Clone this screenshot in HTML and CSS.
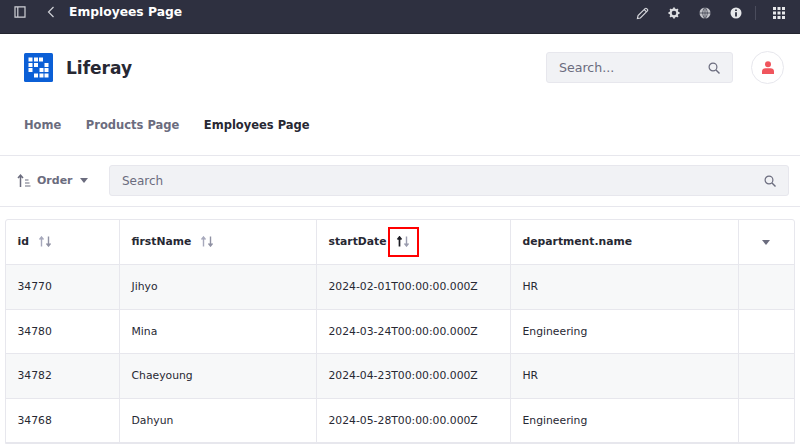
FILE: index.html
```html
<!DOCTYPE html>
<html>
<head>
    <title>Employees Page</title>
    <link rel="stylesheet" href="styles.css">
</head>
<body>
    <div class="control-bar">
        <div class="bar-left">
            <svg class="bar-icon" width="12" height="12" viewBox="0 0 12 12"><path d="M1 .8h10v10.400H1zM3.800 .8v10.400" fill="none" stroke="#cfd0d6" stroke-width="1.200"/></svg>
            <svg class="back-icon" width="8" height="12" viewBox="0 0 8 12"><path d="M6.500 1 1.500 6l5 5" fill="none" stroke="#cfd0d6" stroke-width="1.200"/></svg>
            <span class="bar-title">Employees Page</span>
        </div>
        <div class="bar-right">
            <svg width="13" height="13" viewBox="0 0 14 14"><path d="M1.500 12.500 2.200 9.300 9.800 1.700a1.200 1.200 0 0 1 1.700 0l.8.8a1.200 1.200 0 0 1 0 1.700L4.700 11.800zM8.800 2.700l2.500 2.500" fill="none" stroke="#d8d9de" stroke-width="1.200"/></svg>
            <svg width="12" height="12" viewBox="0 0 12 12"><circle cx="6" cy="6" r="3.400" fill="none" stroke="#dcdde1" stroke-width="2.200"/><path d="M6 .5v2M6 9.500v2M.5 6h2M9.500 6h2M2.100 2.100l1.400 1.400M8.500 8.500l1.400 1.400M9.900 2.100 8.500 3.500M3.500 8.500 2.100 9.900" stroke="#dcdde1" stroke-width="1.800"/></svg>
            <svg width="12" height="12" viewBox="0 0 12 12"><circle cx="6" cy="6" r="5.500" fill="#c4c5cb"/><path d="M6 0v12M0 6h12M6 .5C3 3 3 9 6 11.500M6 .5c3 2.500 3 8.500 0 11" fill="none" stroke="#2e3040" stroke-width=".7"/></svg>
            <svg width="12" height="12" viewBox="0 0 12 12"><circle cx="6" cy="6" r="5.500" fill="#e6e7ea"/><path d="M6 2.500v1.400M6 5.200v4.300" stroke="#2e3040" stroke-width="1.800"/></svg>
            <span class="bar-divider"></span>
            <svg width="12" height="12" viewBox="0 0 12 12" fill="#e6e7ea"><path d="M0 0h3v3H0zM4.500 0h3v3h-3zM9 0h3v3H9zM0 4.500h3v3H0zM4.500 4.500h3v3h-3zM9 4.500h3v3H9zM0 9h3v3H0zM4.500 9h3v3h-3zM9 9h3v3H9z"/></svg>
        </div>
    </div>

    <header class="site-header">
        <div class="brand">
            <svg width="29" height="29" viewBox="0 0 29 29"><rect width="29" height="29" rx="1.500" fill="#0b5fd6"/><path d="M4.500 4.500h4v4h-4zM10 4.500h4v4h-4zM15 4.500h4v4h-4zM4.500 10h4v4h-4zM10 10h4v4h-4zM20.500 10h4v4h-4zM4.500 15h4v4h-4zM15.500 15h4v4h-4zM20.500 15h4v4h-4zM10 20.500h4v4h-4zM15.500 20.500h4v4h-4zM20.500 20.500h4v4h-4z" fill="#fff"/></svg>
            <span class="brand-name">Liferay</span>
        </div>
        <div class="header-tools">
            <div class="header-search">
                <span>Search...</span>
                <svg width="12" height="12" viewBox="0 0 12 12"><circle cx="5" cy="5" r="3.900" fill="none" stroke="#6b6c7e" stroke-width="1.200"/><path d="M8 8l3.500 3.500" stroke="#6b6c7e" stroke-width="1.400"/></svg>
            </div>
            <div class="avatar">
                <svg width="12" height="13" viewBox="0 0 12 13" fill="#f0555d"><circle cx="6" cy="3.200" r="3"/><path d="M0 13v-2.500C0 8.500 1.500 7.300 3.500 7.300h5c2 0 3.500 1.200 3.500 3.200V13z"/></svg>
            </div>
        </div>
    </header>

    <nav class="site-nav">
        <a>Home</a>
        <a>Products Page</a>
        <a class="active">Employees Page</a>
    </nav>

    <div class="toolbar">
        <div class="order">
            <svg width="14" height="14" viewBox="0 0 14 14"><path d="M3.500 13V1.500M1 4l2.500-2.800L6 4" fill="none" stroke="#6b6c7e" stroke-width="1.500"/><path d="M8 6h3.500M8 9h4.500M8 12h5.500" stroke="#6b6c7e" stroke-width="1.200"/></svg>
            <span>Order</span>
            <i class="caret"></i>
        </div>
        <div class="toolbar-search">
            <span>Search</span>
            <svg width="12" height="12" viewBox="0 0 12 12"><circle cx="5" cy="5" r="3.900" fill="none" stroke="#6b6c7e" stroke-width="1.200"/><path d="M8 8l3.500 3.500" stroke="#6b6c7e" stroke-width="1.400"/></svg>
        </div>
    </div>

    <div class="table-wrap">
        <table>
            <thead>
                <tr>
                    <th class="col-id"><div class="th-in">id
                        <svg class="sort" width="14" height="11" viewBox="0 0 14 11"><path d="M3.500 10.500V1M1.500 3.500 3.500 1l2 2.500" fill="none" stroke="#a7a9bc" stroke-width="1.400"/><path d="M10.500 .5V10M8.500 7.500l2 2.500 2-2.500" fill="none" stroke="#8f91a3" stroke-width="1.400"/></svg>
                    </div></th>
                    <th class="col-name"><div class="th-in">firstName
                        <svg class="sort" width="14" height="11" viewBox="0 0 14 11"><path d="M3.500 10.500V1M1.500 3.500 3.500 1l2 2.500" fill="none" stroke="#a7a9bc" stroke-width="1.400"/><path d="M10.500 .5V10M8.500 7.500l2 2.500 2-2.500" fill="none" stroke="#8f91a3" stroke-width="1.400"/></svg>
                    </div></th>
                    <th class="col-date"><div class="th-in">startDate
                        <span class="highlight">
                            <svg width="14" height="11" viewBox="0 0 14 11"><path d="M3.500 10.500V1M1.500 3.500 3.500 1l2 2.500" fill="none" stroke="#1c1c24" stroke-width="1.700"/><path d="M10.500 .5V10M8.500 7.500l2 2.500 2-2.500" fill="none" stroke="#9a9cae" stroke-width="1.400"/></svg>
                        </span>
                    </div></th>
                    <th class="col-dept">department.name</th>
                    <th class="col-actions"><i class="caret"></i></th>
                </tr>
            </thead>
            <tbody>
                <tr class="odd"><td>34770</td><td>Jihyo</td><td>2024-02-01T00:00:00.000Z</td><td>HR</td><td></td></tr>
                <tr><td>34780</td><td>Mina</td><td>2024-03-24T00:00:00.000Z</td><td>Engineering</td><td></td></tr>
                <tr class="odd"><td>34782</td><td>Chaeyoung</td><td>2024-04-23T00:00:00.000Z</td><td>HR</td><td></td></tr>
                <tr><td>34768</td><td>Dahyun</td><td>2024-05-28T00:00:00.000Z</td><td>Engineering</td><td></td></tr>
            </tbody>
        </table>
    </div>
</body>
</html>
```

FILE: styles.css
```css
html, body {
    height: 445px;
    overflow: hidden;
}

body {
    margin: 0;
    background: #fff;
    font-family: "DejaVu Sans", sans-serif;
    color: #272833;
}

.control-bar {
    height: 23px;
    background: #2e3040;
    border-bottom: 1px solid #23242f;
    display: flex;
    justify-content: space-between;
    align-items: center;
    padding: 0 15px 10px 14px;
}

.bar-left {
    display: flex;
    align-items: center;
}

.back-icon {
    margin-left: 21px;
}

.bar-title {
    margin-left: 14px;
    color: #fff;
    font-size: 12.3px;
    font-weight: 700;
}

.bar-right {
    display: flex;
    align-items: center;
    gap: 19px;
    padding-top: 3px;
}

.bar-divider {
    width: 1px;
    height: 14px;
    background: #4a4c5c;
    margin: 0 -2px 0 -6px;
}

.site-header {
    height: 67px;
    display: flex;
    justify-content: space-between;
    align-items: center;
    padding: 0 16px 1px 24px;
}

.brand {
    display: flex;
    align-items: center;
    gap: 13px;
}

.brand-name {
    font-size: 17px;
    font-weight: 700;
    color: #272833;
}

.header-tools {
    display: flex;
    align-items: center;
    gap: 18px;
}

.header-search {
    width: 187px;
    height: 31px;
    box-sizing: border-box;
    background: #f1f2f5;
    border: 1px solid #e7e7ed;
    border-radius: 3px;
    padding: 0 12px;
    display: flex;
    align-items: center;
    justify-content: space-between;
    color: #6b6c7e;
    font-size: 12.6px;
}

.avatar {
    width: 33px;
    height: 33px;
    box-sizing: border-box;
    border: 1px solid #e7e7ed;
    border-radius: 50%;
    display: flex;
    align-items: center;
    justify-content: center;
}

.site-nav {
    height: 45px;
    display: flex;
    align-items: center;
    gap: 24.500px;
    padding: 0 24px 8px;
    border-bottom: 1px solid #e7e7ed;
    font-size: 11.500px;
    font-weight: 700;
    color: #6b6c7e;
}

.site-nav .active {
    color: #272833;
}

.toolbar {
    height: 49px;
    display: flex;
    align-items: center;
    padding: 0 11px 1px 17px;
    border-bottom: 1px solid #e7e7ed;
}

.order {
    display: flex;
    align-items: center;
    width: 92px;
    color: #6b6c7e;
    font-size: 11px;
    font-weight: 700;
}

.order span {
    margin: 0 7px 0 6px;
}

.caret {
    display: inline-block;
    width: 0;
    height: 0;
    border-left: 4.500px solid transparent;
    border-right: 4.500px solid transparent;
    border-top: 5px solid #6b6c7e;
}

.toolbar-search {
    flex: 1;
    height: 31px;
    box-sizing: border-box;
    background: #f1f2f5;
    border: 1px solid #e7e7ed;
    border-radius: 3px;
    padding: 0 12px;
    display: flex;
    align-items: center;
    justify-content: space-between;
    color: #6b6c7e;
    font-size: 12px;
}

.table-wrap {
    margin: 12px 5px 0;
    border: 1px solid #e7e7ed;
    border-radius: 3px 3px 0 0;
}

table {
    width: 100%;
    border-collapse: collapse;
    table-layout: fixed;
    font-size: 10.800px;
}

th, td {
    box-sizing: border-box;
    height: 44.500px;
    padding: 0 12px;
    text-align: left;
    border-left: 1px solid #e7e7ed;
    border-bottom: 1px solid #e7e7ed;
    white-space: nowrap;
}

th {
    padding-bottom: 1px;
    font-weight: 700;
    color: #272833;
}

th:first-child, td:first-child {
    border-left: 0;
    padding-left: 11.500px;
}

.th-in {
    display: flex;
    align-items: center;
}

.sort {
    margin-left: 9px;
}

.highlight {
    display: flex;
    align-items: center;
    justify-content: center;
    box-sizing: border-box;
    width: 31px;
    height: 30px;
    border: 2px solid #f00;
    margin-left: 1px;
}

.col-id { width: 113px; }
.col-name { width: 197px; }
.col-date { width: 194px; }
.col-dept { width: 228px; }
.col-actions { text-align: center; }

tr.odd td {
    background: #f7f8f9;
}
```
